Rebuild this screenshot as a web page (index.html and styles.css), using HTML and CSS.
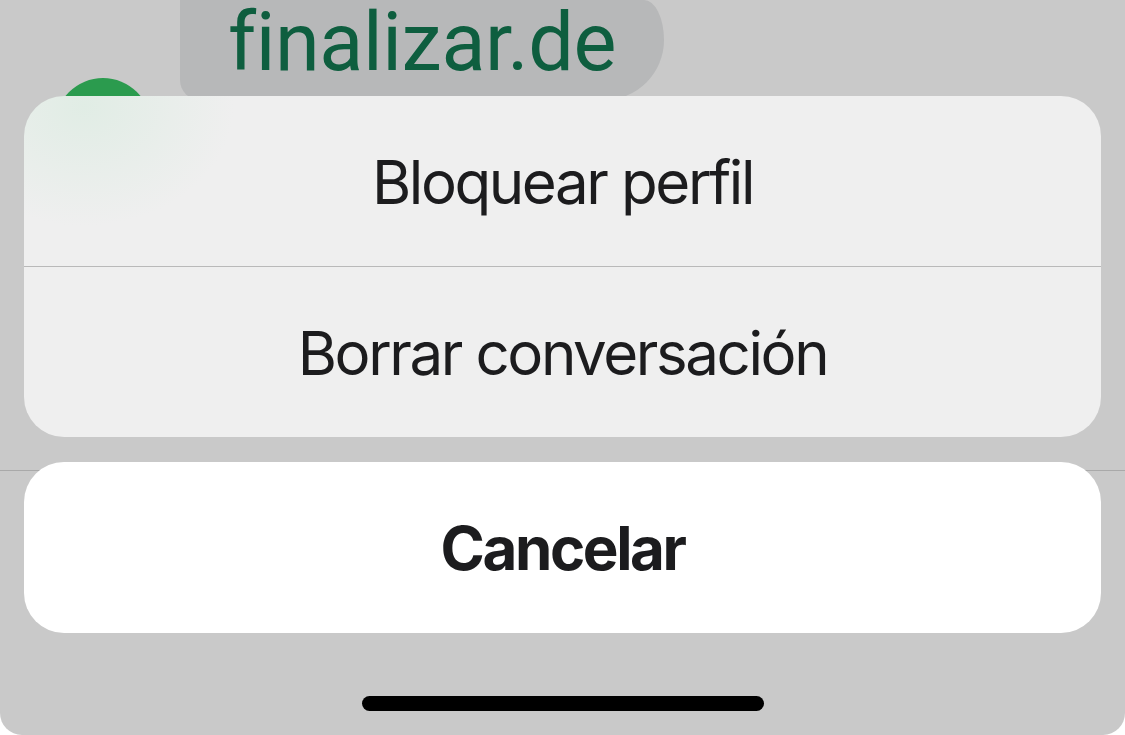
FILE: index.html
```html
<!DOCTYPE html>
<html lang="es">
<head>
<meta charset="utf-8">
<link rel="stylesheet" href="styles.css">
</head>
<body>
<div class="screen">
  <div class="chat">
    <div class="row">
      <div class="avatar"></div>
      <div class="bubble"><span class="bubble-text">finalizar.de</span></div>
    </div>
    <div class="separator"></div>
  </div>

  <div class="sheet">
    <div class="group">
      <div class="action">Bloquear perfil</div>
      <div class="action">Borrar conversación</div>
    </div>
    <div class="cancel">Cancelar</div>
    <div class="home-bar"><div class="home-indicator"></div></div>
  </div>
</div>
</body>
</html>
```

FILE: styles.css
```css
* { box-sizing: border-box; }
html, body { margin: 0; padding: 0; }
body {
  width: 1125px;
  height: 735px;
  overflow: hidden;
  background: #ffffff;
  font-family: Inter, "Liberation Sans", sans-serif;
}
.screen {
  position: relative;
  width: 1125px;
  height: 735px;
  background: #c9c9c9;
  border-radius: 0 0 22px 22px;
  overflow: hidden;
}
.chat {
  display: flex;
  flex-direction: column;
}
.row {
  display: flex;
  align-items: flex-start;
  gap: 30px;
  padding-left: 55px;
  height: 470px;
}
.avatar {
  width: 96px;
  height: 96px;
  margin-top: 78px;
  border-radius: 50%;
  background: #2b9b4e;
  flex: none;
}
.bubble {
  width: 484px;
  height: 100px;
  margin-left: -1px;
  border-top-right-radius: 20px 40px;
  border-bottom-right-radius: 60px;
  border-bottom-left-radius: 20px;
  background: #b7b8b9;
  display: flex;
  justify-content: center;
  align-items: flex-start;
  padding-top: 2px;
  flex: none;
}
.bubble-text {
  display: block;
  font-family: Roboto, "Liberation Sans", sans-serif;
  font-size: 81px;
  line-height: 1;
  color: #0e5e3f;
  letter-spacing: -0.4px;
}
.separator {
  height: 1px;
  background: #a9a9a9;
}
.sheet {
  position: absolute;
  left: 24px;
  top: 96px;
  width: 1077px;
  display: flex;
  flex-direction: column;
}
.group {
  border-radius: 40px;
  overflow: hidden;
  background:
    radial-gradient(ellipse 150px 120px at 60px 10px, rgba(215, 235, 222, 0.6), rgba(239, 239, 239, 0) 100%),
    #efefef;
}
.action {
  height: 170px;
  display: flex;
  align-items: center;
  justify-content: center;
  font-size: 60px;
  color: #1c1c1e;
  letter-spacing: -2.4px;
  padding-top: 2px;
}
.action + .action {
  border-top: 1px solid #b9b9b9;
  height: 171px;
}
.cancel {
  margin-top: 25px;
  height: 171px;
  border-radius: 40px;
  background: #ffffff;
  display: flex;
  align-items: center;
  justify-content: center;
  font-size: 60px;
  font-weight: 700;
  color: #1c1c1e;
  letter-spacing: -2.4px;
}
.home-bar {
  display: flex;
  justify-content: center;
  padding-top: 63px;
}
.home-indicator {
  width: 402px;
  height: 15px;
  border-radius: 8px;
  background: #000000;
}
```
